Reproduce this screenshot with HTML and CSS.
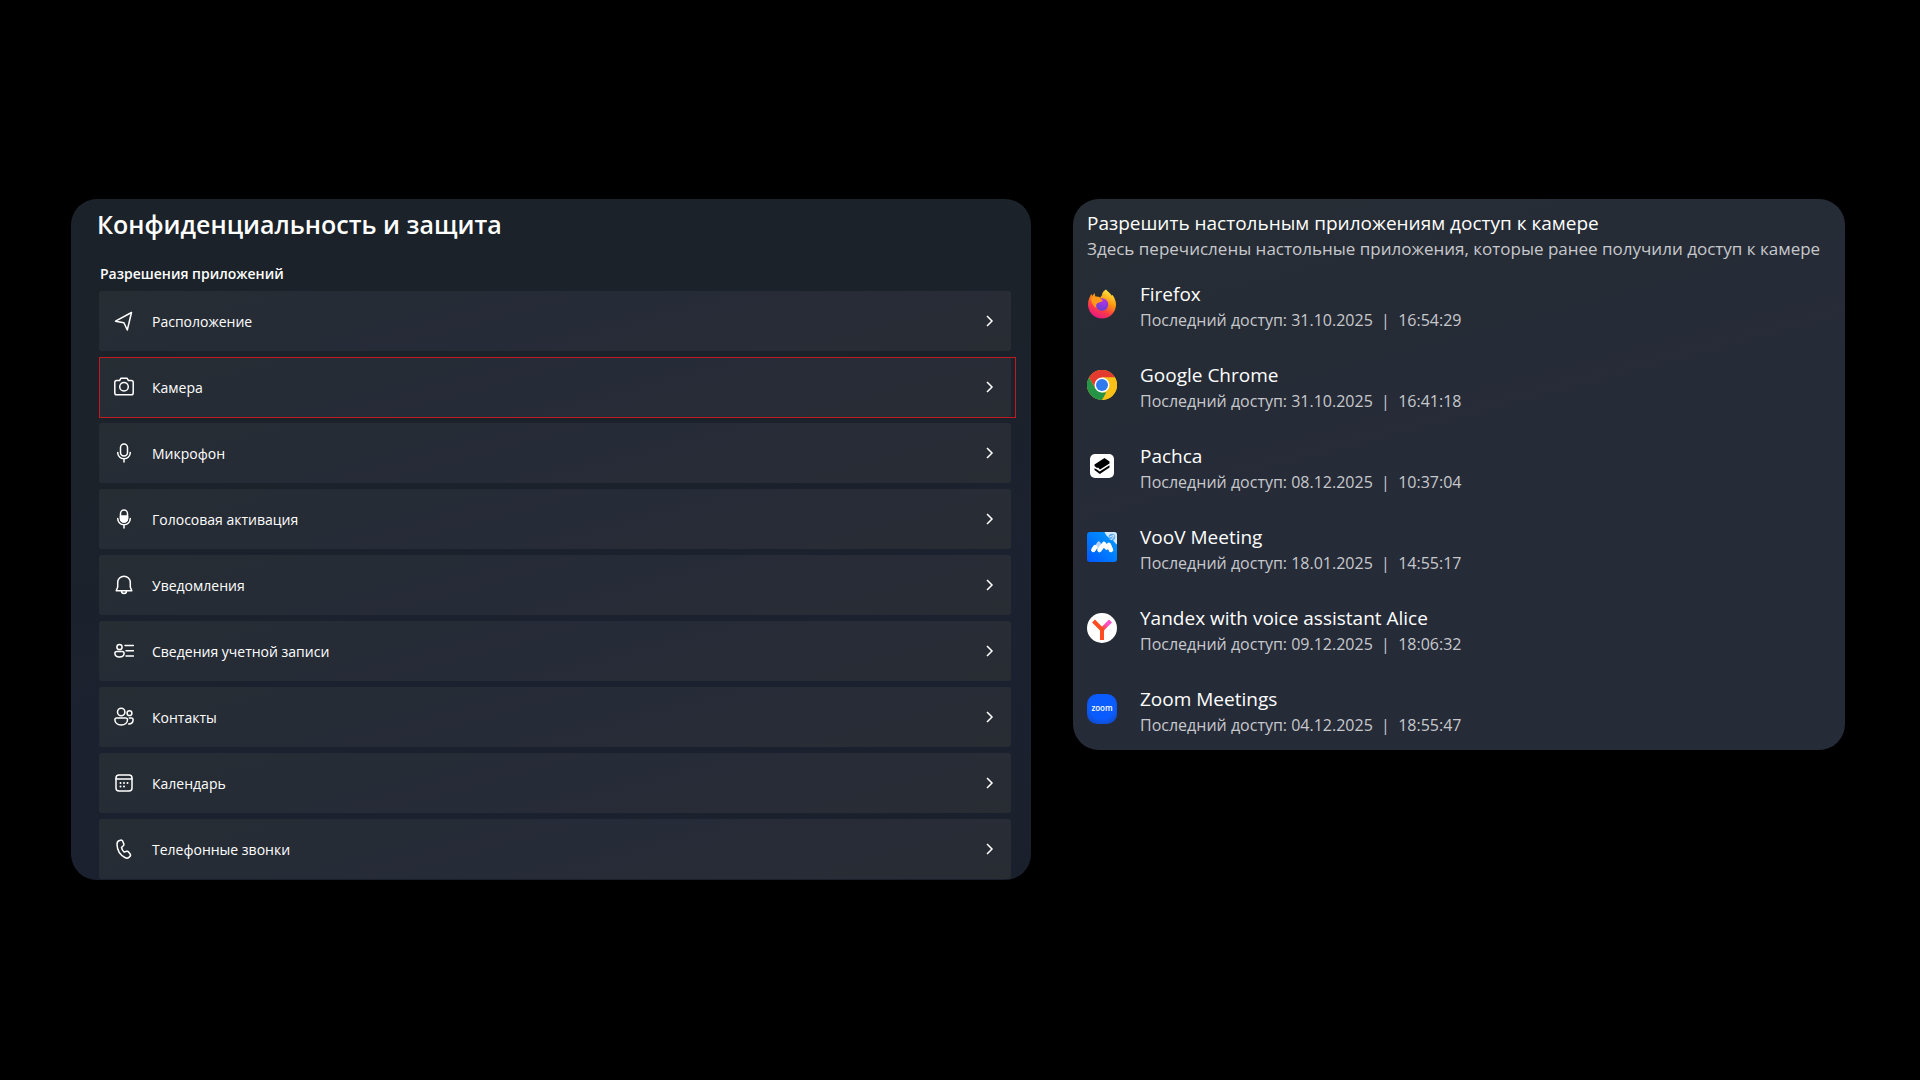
FILE: index.html
```html
<!DOCTYPE html>
<html lang="ru">
<head>
    <meta charset="UTF-8">
    <meta name="viewport" content="width=device-width, initial-scale=1.0">
    <title>Конфиденциальность и защита</title>
    <link rel="stylesheet" href="styles.css">
</head>
<body>
    <main class="page">
        <section class="panel settings">
            <h1>Конфиденциальность и защита</h1>
            <h2>Разрешения приложений</h2>
            <nav class="rows">
                <a href="#location" class="row">
                    <svg class="icon" viewBox="0 0 20 20"><path d="M17.500 1.500 1.500 10.200l8.400 1.600 3.400 7.200z"/></svg>
                    <span>Расположение</span>
                    <svg class="chevron" viewBox="0 0 12 12"><path d="m4 1 5 5-5 5"/></svg>
                </a>
                <a href="#camera" class="row selected">
                    <svg class="icon" viewBox="0 0 20 20"><path d="M2.600 3.500h3l1.400-2.300h6l1.400 2.300h3q1.800 0 1.800 1.800v10.700q0 1.800-1.800 1.800H2.600q-1.800 0-1.800-1.800V5.300q0-1.800 1.800-1.800z"/><circle cx="10" cy="9.800" r="4.300"/></svg>
                    <span>Камера</span>
                    <svg class="chevron" viewBox="0 0 12 12"><path d="m4 1 5 5-5 5"/></svg>
                </a>
                <a href="#microphone" class="row">
                    <svg class="icon" viewBox="0 0 20 20"><rect x="6.500" y="1" width="7" height="12" rx="3.500"/><path d="M3.700 9.500a6.300 6.300 0 0 0 12.600 0M10 15.800V19"/></svg>
                    <span>Микрофон</span>
                    <svg class="chevron" viewBox="0 0 12 12"><path d="m4 1 5 5-5 5"/></svg>
                </a>
                <a href="#voice" class="row">
                    <svg class="icon" viewBox="0 0 20 20"><rect x="6.500" y="1" width="7" height="12" rx="3.500"/><path class="solid" d="M6.500 7h7v2.500a3.500 3.500 0 0 1-7 0z"/><path d="M3.700 9.500a6.300 6.300 0 0 0 12.600 0M10 15.800V19"/></svg>
                    <span>Голосовая активация</span>
                    <svg class="chevron" viewBox="0 0 12 12"><path d="m4 1 5 5-5 5"/></svg>
                </a>
                <a href="#notifications" class="row">
                    <svg class="icon" viewBox="0 0 20 20"><path d="M2.200 15.800 3.700 12V7.500a6.300 6.300 0 0 1 12.600 0V12l1.500 3.800zM7.500 16a2.500 2.500 0 0 0 5 0"/></svg>
                    <span>Уведомления</span>
                    <svg class="chevron" viewBox="0 0 12 12"><path d="m4 1 5 5-5 5"/></svg>
                </a>
                <a href="#account" class="row">
                    <svg class="icon" viewBox="0 0 20 20"><circle cx="5.500" cy="6" r="2.600"/><path d="M2.700 10.500h5.600q1.800 0 1.800 1.800c0 2-1.800 3.700-4.600 3.700S.9 14.300.9 12.300q0-1.800 1.800-1.800zM11 4.500h8.500M12 9.800h7.500M12 15h7.500"/></svg>
                    <span>Сведения учетной записи</span>
                    <svg class="chevron" viewBox="0 0 12 12"><path d="m4 1 5 5-5 5"/></svg>
                </a>
                <a href="#contacts" class="row">
                    <svg class="icon" viewBox="0 0 20 20"><circle cx="7.200" cy="5" r="3.700"/><circle cx="15.500" cy="6.200" r="2.400"/><path d="M2.700 11h9q1.800 0 1.800 1.800c0 3-2.500 5.200-6.300 5.200S.9 15.800.9 12.800Q.9 11 2.700 11zM15.300 11h2q1.800 0 1.800 1.800c0 2.500-1.800 4.200-4.500 4.200"/></svg>
                    <span>Контакты</span>
                    <svg class="chevron" viewBox="0 0 12 12"><path d="m4 1 5 5-5 5"/></svg>
                </a>
                <a href="#calendar" class="row">
                    <svg class="icon" viewBox="0 0 20 20"><rect x="2" y="2" width="16" height="16" rx="3"/><path d="M2 6h16"/><path class="dots" d="M6.500 10h.01M10 10h.01M13.500 10h.01M6.500 13.500h.01M10 13.500h.01"/></svg>
                    <span>Календарь</span>
                    <svg class="chevron" viewBox="0 0 12 12"><path d="m4 1 5 5-5 5"/></svg>
                </a>
                <a href="#calls" class="row">
                    <svg class="icon" viewBox="0 0 20 20"><path d="m5 1.700 1.500-.5q1.500-.4 2.200 1l1 2.400q.5 1.200-.4 2.100L7.500 8.500q.5 2.700 2.700 4.600l2.400-.8q1.200-.3 2 .7l1.500 2q.9 1.300-.2 2.400l-1 1c-1.200 1-2.600.9-4 .1C6 15.900 3.200 10.800 3 5.500c0-1.800.5-3.300 2-3.800z"/></svg>
                    <span>Телефонные звонки</span>
                    <svg class="chevron" viewBox="0 0 12 12"><path d="m4 1 5 5-5 5"/></svg>
                </a>
            </nav>
        </section>

        <section class="panel access">
            <h2>Разрешить настольным приложениям доступ к камере</h2>
            <p class="note">Здесь перечислены настольные приложения, которые ранее получили доступ к камере</p>
            <ul class="apps">
                <li>
                    <svg class="logo" viewBox="0 0 30 30">
                        <defs>
                            <linearGradient id="fire" x1="0.800" y1="0" x2="0.300" y2="1"><stop offset="0" stop-color="#fff04a"/><stop offset="0.400" stop-color="#ff980e"/><stop offset="0.700" stop-color="#ff3b47"/><stop offset="1" stop-color="#e5158a"/></linearGradient>
                            <radialGradient id="globe" cx="0.600" cy="0.200" r="0.900"><stop offset="0" stop-color="#b833e1"/><stop offset="1" stop-color="#5c3fd8"/></radialGradient>
                        </defs>
                        <path fill="url(#fire)" d="M19 .5c1 1.800 4.500 3.500 5.500 6l1-.5c2 2.500 3.500 6 3.500 9.500a14 14 0 0 1-28 0C1 11.500 2.500 8.500 3.500 6.500l.8-1.500 1 2L7.500 4l.8 3.500q3-.3 5 1L15 6c0-2.500 2-4.500 4-5.500z"/>
                        <circle cx="15" cy="15.500" r="6.200" fill="url(#globe)"/>
                        <path fill="#ff9a1a" d="M4.500 9c3-2 7-1.500 9.500 1.200l1.800.8c-.5 2.200-3.800 2-5.800 3.500-1 1-1 3-.5 4.500C6 17 4 13 4.500 9z"/>
                    </svg>
                    <div>
                        <h3>Firefox</h3>
                        <p>Последний доступ: 31.10.2025 &nbsp;|&nbsp; 16:54:29</p>
                    </div>
                </li>
                <li>
                    <svg class="logo" viewBox="0 0 30 30">
                        <circle cx="15" cy="15" r="15" fill="#fbc116"/>
                        <path fill="#e33b2e" d="M2 7.500a15 15 0 0 1 26 0H15l-6.500 11z"/>
                        <path fill="#269447" d="M2 7.500 8.500 18.700 15 22.500h6.500L15 30A15 15 0 0 1 2 7.500z"/>
                        <path fill="#fbc116" d="M21.500 18.700 15 30A15 15 0 0 0 28 7.500H15z"/>
                        <circle cx="15" cy="15" r="7.500" fill="#fff"/>
                        <circle cx="15" cy="15" r="6" fill="#2f7bed"/>
                    </svg>
                    <div>
                        <h3>Google Chrome</h3>
                        <p>Последний доступ: 31.10.2025 &nbsp;|&nbsp; 16:41:18</p>
                    </div>
                </li>
                <li>
                    <svg class="logo" viewBox="0 0 30 30">
                        <rect x="3" y="3" width="24" height="24" rx="5" fill="#fff"/>
                        <path d="m7.500 13.500 10-6.500 5 3.500v2L13 18.500l-2-2-1 .5-2.500-2z"/>
                        <path d="m7.500 17.300 2.500 1.200 2.700 2 9.800-6.300v2.300L12.800 23l-5.300-4z"/>
                    </svg>
                    <div>
                        <h3>Pachca</h3>
                        <p>Последний доступ: 08.12.2025 &nbsp;|&nbsp; 10:37:04</p>
                    </div>
                </li>
                <li>
                    <svg class="logo" viewBox="0 0 30 30">
                        <defs><linearGradient id="voov" x1="0" y1="1" x2="1" y2="0"><stop offset="0" stop-color="#0057ff"/><stop offset="1" stop-color="#00a0ff"/></linearGradient></defs>
                        <rect width="30" height="30" rx="3" fill="url(#voov)"/>
                        <path fill="#d5e9ff" d="M17.500 0H27q3 0 3 3v9.500C28 11 27 9.500 26 8 23.500 7 19 4.500 17.500 0z"/>
                        <circle cx="25" cy="5" r="3.300" fill="#62aef5"/>
                        <path stroke="#d5e9ff" fill="none" d="m22.500 5 5-2M24 8l3-4"/>
                        <path fill="#b9d3ff" d="m8 14 2.500-4q1.200-1.300 2.500 0l2 3.500-3.500 5z"/>
                        <path fill="none" stroke="#fff" stroke-width="4.500" stroke-linejoin="round" stroke-linecap="round" d="m6.300 18 2-3M12.500 18l4.500-6 2.500 3.500 2.300-2.500 2.200 5"/>
                    </svg>
                    <div>
                        <h3>VooV Meeting</h3>
                        <p>Последний доступ: 18.01.2025 &nbsp;|&nbsp; 14:55:17</p>
                    </div>
                </li>
                <li>
                    <svg class="logo" viewBox="0 0 30 30">
                        <defs><linearGradient id="alice" gradientUnits="userSpaceOnUse" x1="15" y1="18" x2="24" y2="8"><stop offset="0" stop-color="#ff4a22"/><stop offset="0.700" stop-color="#ff50cf"/></linearGradient></defs>
                        <circle cx="15" cy="15" r="15" fill="#fff"/>
                        <path fill="none" stroke="url(#alice)" stroke-width="4" d="m15 16.500 8.500-8.500"/>
                        <path fill="none" stroke="#ff4a22" stroke-width="4" d="M6.500 8 15 16.500V27"/>
                    </svg>
                    <div>
                        <h3>Yandex with voice assistant Alice</h3>
                        <p>Последний доступ: 09.12.2025 &nbsp;|&nbsp; 18:06:32</p>
                    </div>
                </li>
                <li>
                    <svg class="logo" viewBox="0 0 30 30">
                        <defs><radialGradient id="zoom" cx="0.500" cy="0.400" r="0.700"><stop offset="0.600" stop-color="#0b5cff"/><stop offset="1" stop-color="#1048c0"/></radialGradient></defs>
                        <rect width="30" height="30" rx="10" fill="url(#zoom)"/>
                        <text class="zoom-text" x="15" y="17" text-anchor="middle">zoom</text>
                    </svg>
                    <div>
                        <h3>Zoom Meetings</h3>
                        <p>Последний доступ: 04.12.2025 &nbsp;|&nbsp; 18:55:47</p>
                    </div>
                </li>
            </ul>
        </section>
    </main>
</body>
</html>
```
FILE: styles.css
```css
* {
    margin: 0;
    padding: 0;
    box-sizing: border-box;
}

body {
    font-family: "Open Sans", "Noto Sans", sans-serif;
    background: #000000;
    color: #ffffff;
}

.page {
    display: grid;
    grid-template-columns: 960fr 772fr;
    align-items: start;
    gap: 42px;
    padding: 199px 75px 40px 71px;
}

.panel {
    border-radius: 26px;
    overflow: hidden;
}

/* privacy list */
.settings {
    padding: 7px 20px 1px 28px;
    background: linear-gradient(170deg, #1b2229 0%, #1b222a 35%, #1c2130 70%, #1a202b 100%);
}

.settings h1 {
    margin-left: -2px;
    font-size: 25px;
    line-height: 36px;
    font-weight: 600;
}

.settings h2 {
    margin: 20px 0 5px 1px;
    font-size: 14px;
    line-height: 24px;
    font-weight: 600;
}

.rows {
    display: flex;
    flex-direction: column;
    gap: 6px;
}

.row {
    position: relative;
    display: flex;
    align-items: center;
    height: 60px;
    padding: 0 16px 0 15px;
    border-radius: 3px;
    background: linear-gradient(165deg, #262d33, #262b38 50%, #282d34);
    color: #ffffff;
    font-size: 14px;
    line-height: 20px;
    text-decoration: none;
}

.row span {
    flex: 1;
    padding-top: 2px;
    margin-left: 18px;
}

/* red frame around the highlighted row */
.selected::after {
    content: "";
    position: absolute;
    inset: 0 -5px -1px 0;
    border: 1px solid #c01c1f;
}

.icon {
    width: 20px;
    height: 20px;
    fill: none;
    stroke: #ffffff;
    stroke-width: 1.5;
    stroke-linejoin: round;
    stroke-linecap: round;
}

.icon .solid {
    fill: #ffffff;
}

.icon .dots {
    stroke-width: 2;
}

.chevron {
    width: 12px;
    height: 12px;
    fill: none;
    stroke: #ffffff;
    stroke-width: 1.5;
}

/* desktop apps with camera access */
.access {
    padding: 11px 14px 12px;
    background: linear-gradient(165deg, #262d34, #262b38 50%, #262b38);
}

.access h2 {
    font-size: 19px;
    line-height: 26px;
    font-weight: 400;
}

.note {
    color: #c6c8cc;
    font-size: 17px;
    line-height: 26px;
}

.apps {
    display: flex;
    flex-direction: column;
    gap: 29px;
    margin-top: 19px;
    list-style: none;
}

.apps li {
    display: flex;
    align-items: flex-start;
    gap: 23px;
}

.apps h3 {
    font-size: 19px;
    line-height: 26px;
    font-weight: 400;
}

.apps p {
    color: #c6c8cc;
    font-size: 16px;
    line-height: 26px;
}

.logo {
    width: 30px;
    height: 30px;
    margin-top: 8px;
    flex: none;
}

.zoom-text {
    fill: #ffffff;
    font-size: 8px;
    font-weight: 600;
}
```
